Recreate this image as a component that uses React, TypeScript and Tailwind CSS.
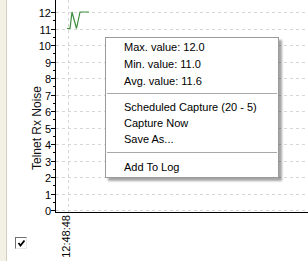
import React from "react";

const FONT = { fontFamily: '"Liberation Sans", Arial, sans-serif' };

function Chart() {
  const yOf = (v: number) => 210 - 16.5 * v;
  const ox = 44; // svg left offset in page px
  const X = (x: number) => x - ox;
  const values = Array.from({ length: 13 }, (_, i) => i);
  const minor = Array.from({ length: 12 }, (_, i) => i + 0.5);
  const pts: [number, number][] = [
    [67, 11],
    [70, 11],
    [72, 12],
    [76.5, 11],
    [80, 12],
    [89, 12],
  ];
  return (
    <svg width={264} height={261} className="block overflow-visible" style={FONT}>
      {values.map((v) => (
        <line
          key={"g" + v}
          x1={X(56)}
          x2={264}
          y1={Math.round(yOf(v)) + 0.5}
          y2={Math.round(yOf(v)) + 0.5}
          stroke="#d6d6d6"
          strokeDasharray="3 3"
        />
      ))}
      <line x1={X(68) + 0.5} x2={X(68) + 0.5} y1={0} y2={212} stroke="#d6d6d6" strokeDasharray="3 3" />
      <line x1={X(55) + 0.5} x2={X(55) + 0.5} y1={0} y2={213} stroke="#000" />
      <line x1={X(55)} x2={264} y1={212.5} y2={212.5} stroke="#000" />
      {values.map((v) => (
        <line
          key={"t" + v}
          x1={X(51)}
          x2={X(55)}
          y1={Math.round(yOf(v)) + 0.5}
          y2={Math.round(yOf(v)) + 0.5}
          stroke="#000"
        />
      ))}
      {minor.map((v) => (
        <line
          key={"m" + v}
          x1={X(53)}
          x2={X(55)}
          y1={Math.round(yOf(v)) + 0.5}
          y2={Math.round(yOf(v)) + 0.5}
          stroke="#000"
        />
      ))}
      {values.map((v) => (
        <text
          key={"l" + v}
          x={X(51)}
          y={Math.round(yOf(v)) + 4.5}
          textAnchor="end"
          fontSize={11}
          fill="#000"
        >
          {v}
        </text>
      ))}
      <text transform={`translate(${X(70)}, 215) rotate(-90)`} textAnchor="end" fontSize={11} fill="#000">
        12:48:48
      </text>
      <polyline
        points={pts.map(([x, v]) => `${X(x)},${yOf(v)}`).join(" ")}
        fill="none"
        stroke="#3c8f3c"
        strokeWidth={1.2}
      />
    </svg>
  );
}

function MenuItem({ children, h }: { children: React.ReactNode; h: string }) {
  return <div className={`${h} flex items-center pl-[18px] text-[11px] text-black whitespace-nowrap`}>{children}</div>;
}

export default function App() {
  return (
    <div className="relative w-[308px] h-[261px] overflow-hidden bg-white flex" style={FONT}>
      <div className="w-[6px] h-full bg-[#f3f1e6]" />
      <div className="w-[1px] h-full bg-[#d4d0c0]" />
      <div className="w-[37px] h-full flex flex-col">
        <div className="pt-[86px] flex justify-end pr-[1px]">
          <div className="[writing-mode:vertical-rl] rotate-180 text-[12px] leading-[12px] text-[#111] whitespace-nowrap">
            Telnet Rx Noise
          </div>
        </div>
        <div className="flex-1" />
        <div className="ml-[8px] mb-[12px] w-[12px] h-[12px] border border-t-[#707070] border-l-[#707070] border-b-[#e8e8e8] border-r-[#e8e8e8] bg-white flex items-center justify-center">
          <svg width="9" height="9" viewBox="0 0 9 9">
            <path d="M1.5 4 L3.5 6.5 L7.5 1.5" fill="none" stroke="#000" strokeWidth="1.8" />
          </svg>
        </div>
      </div>
      <Chart />
      <div className="absolute left-[105px] top-[37px] w-[174px] bg-white border border-[#9a9a9a] pt-[1px] pb-[2px] shadow-[3px_3px_2px_rgba(0,0,0,0.35)]">
        <MenuItem h="h-[17px]">Max. value: 12.0</MenuItem>
        <MenuItem h="h-[17px]">Min. value: 11.0</MenuItem>
        <MenuItem h="h-[17px]">Avg. value: 11.6</MenuItem>
        <div className="mx-[1px] mt-[3px] mb-[5px] h-[1px] bg-[#a8a8a8]" />
        <MenuItem h="h-[16px]">Scheduled Capture (20 - 5)</MenuItem>
        <MenuItem h="h-[16px]">Capture Now</MenuItem>
        <MenuItem h="h-[16px]">Save As...</MenuItem>
        <div className="mx-[1px] mt-[5px] mb-[6px] h-[1px] bg-[#a8a8a8]" />
        <MenuItem h="h-[16px]">Add To Log</MenuItem>
      </div>
    </div>
  );
}
